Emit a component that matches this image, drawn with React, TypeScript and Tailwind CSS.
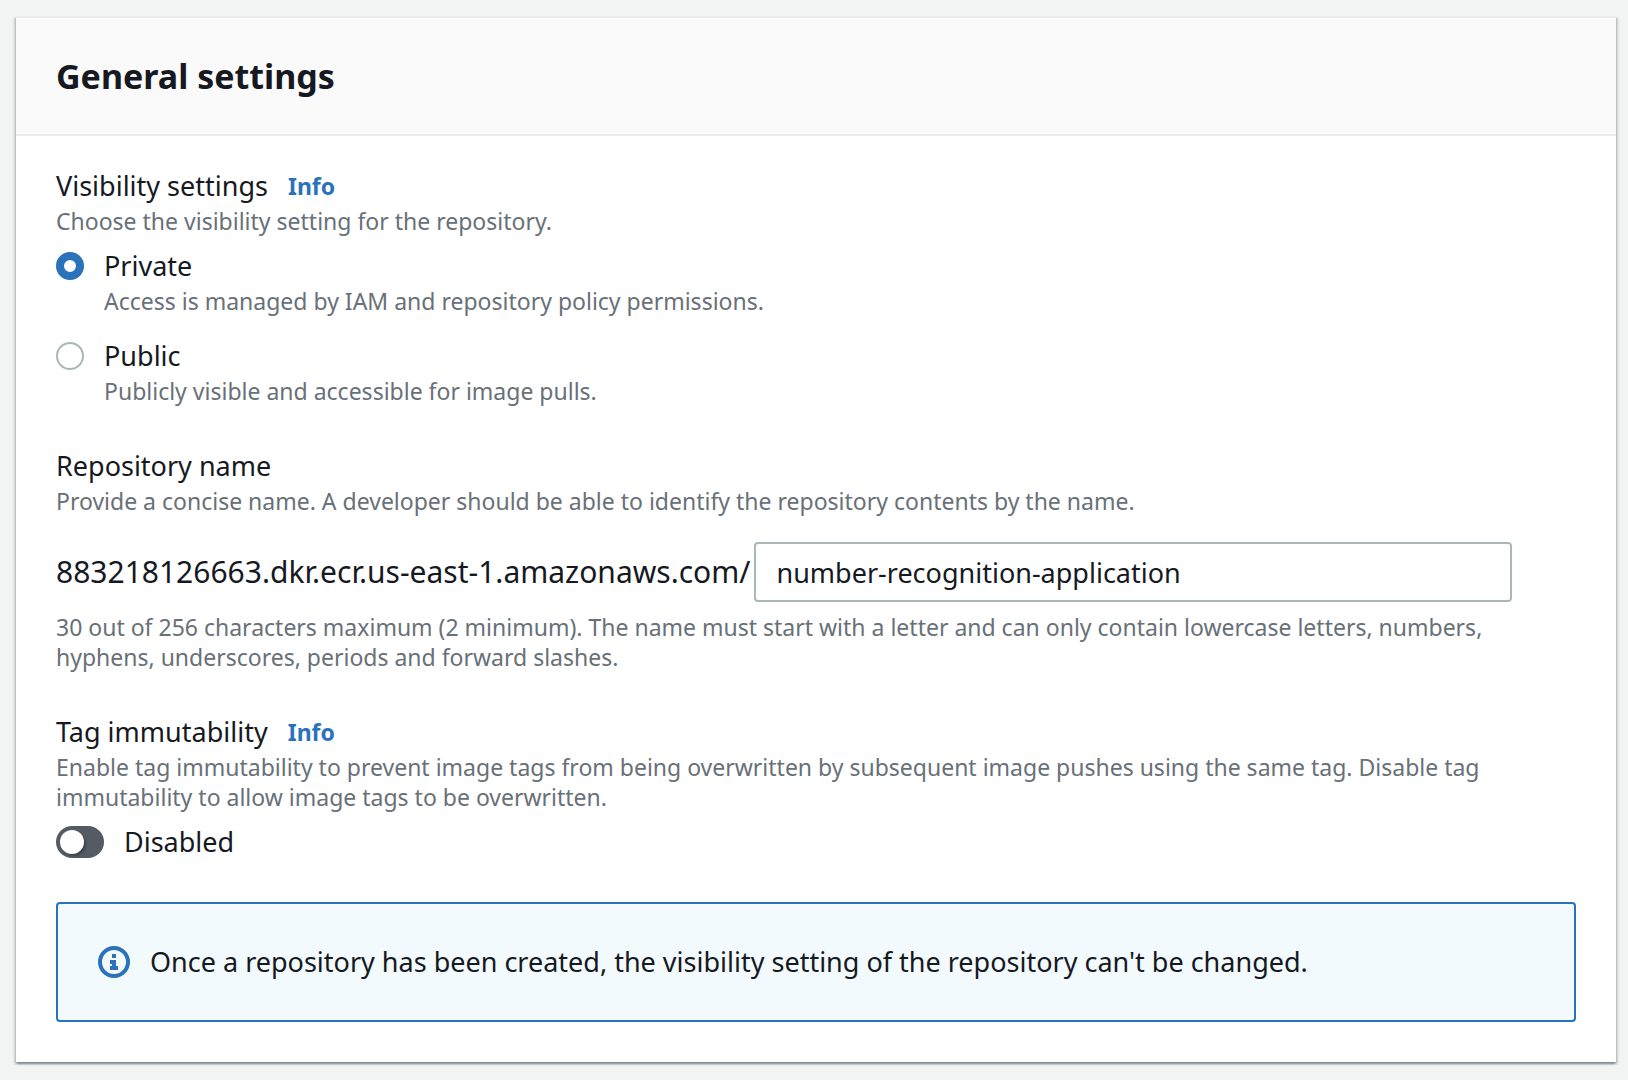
import { useState } from "react";
import type { ReactNode } from "react";

const hint = "text-[23px] leading-[30px] text-[#687078]";
const label = "text-[27px] leading-[40px]";

function InfoLink() {
  return (
    <a href="#info" className="text-[23px] leading-[40px] font-bold text-[#2a72b9] hover:underline">
      Info
    </a>
  );
}

function Hint({ id, children }: { id?: string; children: ReactNode }) {
  return (
    <p id={id} className={hint}>
      {children}
    </p>
  );
}

function InfoIcon() {
  return (
    <svg viewBox="0 0 32 32" className="size-8 shrink-0 text-[#2a72b9]" aria-hidden="true">
      <circle cx="16" cy="16" r="14" fill="none" stroke="currentColor" strokeWidth="4" />
      <path d="M14 8h4v4h-4zM12 14h6v6h2v4h-8v-4h2v-2h-2z" fill="currentColor" />
    </svg>
  );
}

const options = [
  { value: "private", title: "Private", text: "Access is managed by IAM and repository policy permissions." },
  { value: "public", title: "Public", text: "Publicly visible and accessible for image pulls." },
];

export default function App() {
  const [visibility, setVisibility] = useState("private");
  const [name, setName] = useState("number-recognition-application");
  const [immutable, setImmutable] = useState(false);

  return (
    <main className="min-h-screen bg-[#f2f3f3] px-4 pt-4 pr-3 pb-4 font-['Noto_Sans',sans-serif] text-[#16191f]">
      <section className="border-t-2 border-[#eaeded] bg-white shadow-[0_2px_2px_0_rgba(0,28,36,0.3),2px_2px_2px_0_rgba(0,28,36,0.15),-2px_2px_2px_0_rgba(0,28,36,0.15)]">
        <header className="border-b-2 border-[#eaeded] bg-[#fafafa] px-10 py-9">
          <h2 className="text-[34px] leading-[44px] font-bold">General settings</h2>
        </header>

        <div className="flex flex-col gap-10 px-10 pt-[30px] pb-10">
          <fieldset className="max-w-[1456px]">
            <div className="flex gap-5">
              <legend className={label}>Visibility settings</legend>
              <InfoLink />
            </div>
            <Hint>Choose the visibility setting for the repository.</Hint>
            <div className="mt-[10px] flex flex-col gap-5">
              {options.map((o) => (
                <div key={o.value} className="flex gap-5">
                  <input
                    type="radio"
                    id={o.value}
                    name="visibility"
                    value={o.value}
                    checked={visibility === o.value}
                    onChange={() => setVisibility(o.value)}
                    aria-describedby={`${o.value}-hint`}
                    className="mt-1.5 size-7 shrink-0 appearance-none rounded-full border-2 border-[#aab7b8] bg-white checked:border-8 checked:border-[#2a72b9]"
                  />
                  <div>
                    <label htmlFor={o.value} className={`block ${label}`}>
                      {o.title}
                    </label>
                    <Hint id={`${o.value}-hint`}>{o.text}</Hint>
                  </div>
                </div>
              ))}
            </div>
          </fieldset>

          <div className="max-w-[1456px]">
            <label htmlFor="repo" className={`block ${label}`}>
              Repository name
            </label>
            <Hint>Provide a concise name. A developer should be able to identify the repository contents by the name.</Hint>
            <div className="mt-[26px] mb-[10px] flex items-center gap-1">
              <span className="text-[30px] leading-[40px]">883218126663.dkr.ecr.us-east-1.amazonaws.com/</span>
              <input
                id="repo"
                type="text"
                value={name}
                onChange={(e) => setName(e.target.value)}
                className="h-[60px] min-w-0 flex-1 rounded-sm border-2 border-[#aab7b8] bg-white px-5 text-[27px]"
              />
            </div>
            <Hint>
              30 out of 256 characters maximum (2 minimum). The name must start with a letter and can only contain
              lowercase letters, numbers, hyphens, underscores, periods and forward slashes.
            </Hint>
          </div>

          <div className="max-w-[1456px]">
            <div className="flex gap-5">
              <h3 className={label}>Tag immutability</h3>
              <InfoLink />
            </div>
            <Hint>
              Enable tag immutability to prevent image tags from being overwritten by subsequent image pushes using the
              same tag. Disable tag immutability to allow image tags to be overwritten.
            </Hint>
            <div className="mt-[10px] flex items-center gap-5">
              <input
                id="immutable"
                type="checkbox"
                role="switch"
                checked={immutable}
                onChange={(e) => setImmutable(e.target.checked)}
                className="flex h-8 w-12 shrink-0 appearance-none items-center rounded-full bg-[#545b64] px-1 before:size-6 before:rounded-full before:bg-white before:shadow-[2px_2px_2px_rgba(0,0,0,0.25)] checked:justify-end checked:bg-[#2a72b9]"
              />
              <label htmlFor="immutable" className={label}>
                {immutable ? "Enabled" : "Disabled"}
              </label>
            </div>
          </div>

          <div role="note" className="flex items-center gap-5 rounded-sm border-2 border-[#2a72b9] bg-[#f2fafd] px-10 py-[38px]">
            <InfoIcon />
            <p className={label}>
              Once a repository has been created, the visibility setting of the repository can't be changed.
            </p>
          </div>
        </div>
      </section>
    </main>
  );
}
